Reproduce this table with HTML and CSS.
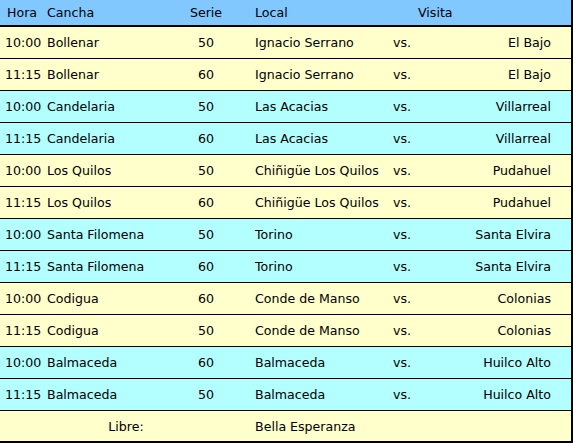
FILE: index.html
```html
<!DOCTYPE html>
<html lang="es">
<head>
<meta charset="utf-8">
<title>Programación</title>
<link rel="stylesheet" href="styles.css">
</head>
<body>
<table class="fixture">
  <colgroup>
    <col class="c-hora"><col class="c-cancha"><col class="c-serie"><col class="c-local"><col class="c-vs"><col class="c-visita">
  </colgroup>
  <thead>
    <tr>
      <th class="hora">Hora</th>
      <th class="cancha">Cancha</th>
      <th class="serie">Serie</th>
      <th class="local">Local</th>
      <th class="vs"></th>
      <th class="visita-h">Visita</th>
    </tr>
  </thead>
  <tbody>
    <tr class="y"><td class="hora">10:00</td><td class="cancha">Bollenar</td><td class="serie">50</td><td class="local">Ignacio Serrano</td><td class="vs">vs.</td><td class="visita">El Bajo</td></tr>
    <tr class="y"><td class="hora">11:15</td><td class="cancha">Bollenar</td><td class="serie">60</td><td class="local">Ignacio Serrano</td><td class="vs">vs.</td><td class="visita">El Bajo</td></tr>
    <tr class="c"><td class="hora">10:00</td><td class="cancha">Candelaria</td><td class="serie">50</td><td class="local">Las Acacias</td><td class="vs">vs.</td><td class="visita">Villarreal</td></tr>
    <tr class="c"><td class="hora">11:15</td><td class="cancha">Candelaria</td><td class="serie">60</td><td class="local">Las Acacias</td><td class="vs">vs.</td><td class="visita">Villarreal</td></tr>
    <tr class="y"><td class="hora">10:00</td><td class="cancha">Los Quilos</td><td class="serie">50</td><td class="local">Chiñigüe Los Quilos</td><td class="vs">vs.</td><td class="visita">Pudahuel</td></tr>
    <tr class="y"><td class="hora">11:15</td><td class="cancha">Los Quilos</td><td class="serie">60</td><td class="local">Chiñigüe Los Quilos</td><td class="vs">vs.</td><td class="visita">Pudahuel</td></tr>
    <tr class="c"><td class="hora">10:00</td><td class="cancha">Santa Filomena</td><td class="serie">50</td><td class="local">Torino</td><td class="vs">vs.</td><td class="visita">Santa Elvira</td></tr>
    <tr class="c"><td class="hora">11:15</td><td class="cancha">Santa Filomena</td><td class="serie">60</td><td class="local">Torino</td><td class="vs">vs.</td><td class="visita">Santa Elvira</td></tr>
    <tr class="y"><td class="hora">10:00</td><td class="cancha">Codigua</td><td class="serie">60</td><td class="local">Conde de Manso</td><td class="vs">vs.</td><td class="visita">Colonias</td></tr>
    <tr class="y"><td class="hora">11:15</td><td class="cancha">Codigua</td><td class="serie">50</td><td class="local">Conde de Manso</td><td class="vs">vs.</td><td class="visita">Colonias</td></tr>
    <tr class="c"><td class="hora">10:00</td><td class="cancha">Balmaceda</td><td class="serie">60</td><td class="local">Balmaceda</td><td class="vs">vs.</td><td class="visita">Huilco Alto</td></tr>
    <tr class="c"><td class="hora">11:15</td><td class="cancha">Balmaceda</td><td class="serie">50</td><td class="local">Balmaceda</td><td class="vs">vs.</td><td class="visita">Huilco Alto</td></tr>
    <tr class="y libre"><td class="libre-label" colspan="3">Libre:</td><td class="local" colspan="3">Bella Esperanza</td></tr>
  </tbody>
</table>
</body>
</html>
```
FILE: styles.css
```css
html, body {
  margin: 0;
  padding: 0;
  background: #ffffff;
}

.fixture {
  table-layout: fixed;
  border-collapse: separate;
  border-spacing: 0;
  width: 573px;
  border-right: 2px solid #000;
  font-family: "DejaVu Sans", Verdana, sans-serif;
  font-size: 12.6px;
  color: #000;
}

.c-hora { width: 43px; }
.c-cancha { width: 117px; }
.c-serie { width: 92px; }
.c-local { width: 136px; }
.c-vs { width: 30px; }
.c-visita { width: 153px; }

.fixture th,
.fixture td {
  padding: 0;
  white-space: nowrap;
  overflow: visible;
  vertical-align: middle;
  font-weight: normal;
  text-align: left;
}

.fixture thead th {
  background: #80c8ff;
  height: 25px;
  border-bottom: 2px solid #000;
}

.fixture tbody td {
  height: 31px;
  border-bottom: 1px solid #000;
}

.fixture tbody tr.libre td {
  height: 30px;
  border-bottom: 2px solid #000;
}

.fixture .y td { background: #ffffcc; }
.fixture .c td { background: #b3ffff; }

.fixture th.hora { padding-left: 7px; }
.fixture td.hora { padding-left: 5px; }
.fixture .cancha { padding-left: 4px; }
.fixture .serie { text-align: center; }
.fixture .local { padding-left: 3px; }
.fixture .vs { padding-left: 5px; }
.fixture .visita-h { padding-left: 0; }
.fixture td.visita { text-align: right; padding-right: 20px; }
.fixture td.libre-label { text-align: center; }
```
